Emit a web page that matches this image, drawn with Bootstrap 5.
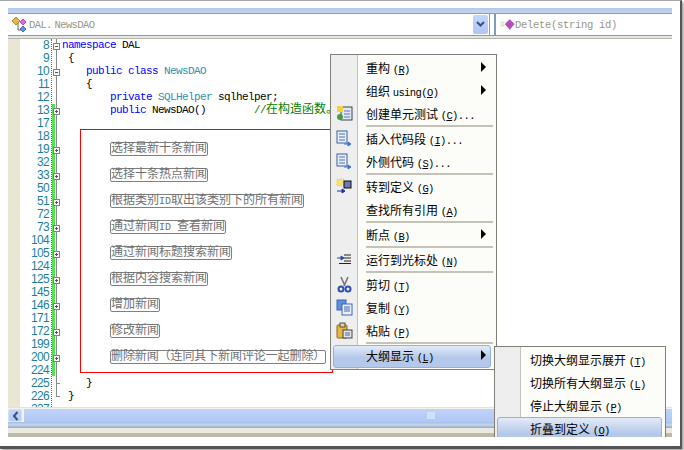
<!DOCTYPE html>
<html lang="zh"><head><meta charset="utf-8"><title>NewsDAO</title>
<link href="https://cdn.jsdelivr.net/npm/bootstrap@5.3.0/dist/css/bootstrap.min.css" rel="stylesheet">
<style>
html,body{margin:0;width:684px;height:450px;overflow:hidden;background:#fff}
.shot{width:684px;height:450px;position:relative;overflow:hidden;font-family:"Liberation Mono","Noto Sans CJK SC",monospace;font-size:11px;color:#000}
.frame{width:682px;height:449px;background:#fff;border-top:1px solid #a8a8a8;border-right:2px solid #555;border-bottom:3px solid #555;box-shadow:2px 2px 2px #aaa;padding:7px 0 8px 8px}
.ide{width:664px;height:429px}
.stripe{height:6px;background:linear-gradient(#b2c8ec,#c5d5ef);border-bottom:1px solid #7fa0c0}
.navrow{height:21px;background:#fff;gap:4px}
.navbox{height:21px;color:#a09d8f}
.navleft{width:482px;border-right:1px solid #7f9db9}
.navright{flex:1;border-left:2px solid #7f9db9}
.navtxt{font-size:10.5px;letter-spacing:-.3px;line-height:20px;color:#989585}
.navdal{word-spacing:-3px;letter-spacing:-.6px}
.ddbtn{width:15px;height:19px;margin:0 1px 0 auto;background:linear-gradient(#c4d6fb,#aec7f8);border-radius:2px}
.tan{height:4px;background:#dfe6ee;border-top:1px solid #7f9db9;border-bottom:1px solid #b9b5a4}
.edit{height:368px;overflow:hidden;background:#fff}
.margin-strip{width:12px;background:#e9e6d3}
.nums{width:29px;text-align:right;color:#1c7f9f;font-size:12px;letter-spacing:-.7px;line-height:13px;font-family:"Liberation Sans",sans-serif}
.dotline{width:3px;border-right:1px dotted #1c7f9f}
.foldcol{width:10px;position:relative}
.foldline{position:absolute;left:4px;top:0;width:1px;height:358px;background:#8a8a8a}
.foldgreen{position:absolute;left:0;top:65px;width:3px;height:272px;background:#54e254}
.tick{position:absolute;left:4px;width:4px;height:1px;background:#8a8a8a}
.code{flex:1;font-size:11px;line-height:13px;letter-spacing:-.6px}
.crow{height:13px;position:relative;white-space:pre}
.kw{color:#0000ff}.tp{color:#2b91af}.cm{color:#008000}
.cjk{font-size:12px;letter-spacing:0}
.fold{position:absolute;left:45px;width:7px;height:7px;background:#fff;border:1px solid #808080;z-index:2}
.fold::before{content:"";position:absolute;left:1px;right:1px;top:2px;height:1px;background:#555}
.fold.plus::after{content:"";position:absolute;top:1px;bottom:1px;left:2px;width:1px;background:#555}
.coll{display:inline-block;position:relative;top:-1px;height:14px;line-height:12px;border:1px solid #808080;border-radius:2px;color:#707070;font-size:12px;letter-spacing:0;margin-left:48px;padding:0;vertical-align:top}
.latin{font-size:10px}
.tight{letter-spacing:-.1px}
.redbox{position:absolute;left:80px;top:129px;width:253px;height:244px;border:1px solid #f00;z-index:3}
.hscroll{height:15px;background:#f4f3e9;border-top:1px solid #e6e3cf;padding:1px 0 0}
.arrowbtn{width:14px;height:13px;background:linear-gradient(#c0d3f9,#b4cbf6);border:1px solid #d5e0f5;border-radius:2px}
.track{flex:1;height:13px;margin-left:2px;background:linear-gradient(#bfd2fa,#b0c8f6)}
.grip{margin-left:166px}
.lower{height:6px;background:linear-gradient(#a9bfdc 0,#c6d6ee 50%,#8fa8c8 100%)}
.lightb{height:5px;background:#eceae0}
.tanb{height:4px;background:#bdb9a7}
.cmenu{position:absolute;background:#fcfcf9;border:1px solid #7f7f78;z-index:5;font-family:"Noto Sans CJK SC",sans-serif;font-size:12px;line-height:23px;color:#000}
.menu1{left:330px;top:54px;width:167px;height:316px;padding-top:1px}
.menu2{left:494px;top:346px;width:172px;height:91px;padding-top:1px;z-index:6;border-bottom:0;overflow:hidden}
.strip{position:absolute;left:0;top:0;bottom:0;background:#eee;border-right:1px solid #c5c2b8}
.menu1 .strip{width:27px}.menu2 .strip{width:26px}
.mi{height:23px;position:relative;padding-left:35px;white-space:nowrap}
.mi span.u{font-family:"Liberation Mono",monospace;font-size:10.5px;letter-spacing:-.6px}
.sep{height:2px;margin:0 3px 0 35px;background:#c5c2b8;position:relative}
.hi{position:absolute;background:linear-gradient(#e3ebf8,#b4c9e9 55%,#b4c9e9);border:1px solid #8fb2e2;border-radius:3px;z-index:0}
.hi1{left:2px;right:5px;top:290px;height:23px}
.hi2{left:2px;right:3px;top:70px;height:30px}
.caret{position:absolute;right:10px;top:6px;width:0;height:0;border-left:5px solid #000;border-top:5px solid transparent;border-bottom:5px solid transparent}
.ic{position:absolute;left:5px;top:3px}
</style></head><body>
<div class="shot"><div class="frame"><div class="ide d-flex flex-column">
<div class="stripe"></div>
<div class="navrow d-flex">
 <div class="navbox navleft d-flex align-items-center ps-1">
  <svg width="17" height="17" viewBox="0 0 17 17"><path d="M6 10v4h3M6 10V7" stroke="#666" fill="none"/><path d="M0 5l4-4 4 4-4 4z" fill="#e8b93c" stroke="#8a6a10" stroke-width=".7"/><path d="M8 6l3-3 3 3-3 3z" fill="#e860e8" stroke="#903090" stroke-width=".7"/><path d="M8 13l3-3 3 3-3 3z" fill="#5c90e0" stroke="#305090" stroke-width=".7"/></svg>
  <span class="navtxt navdal">DAL. NewsDAO</span>
  <div class="ddbtn d-flex align-items-center justify-content-center"><svg width="9" height="7" viewBox="0 0 9 7"><path d="M1 1l3.500 3.500L8 1" stroke="#39507a" stroke-width="2" fill="none"/></svg></div>
 </div>
 <div class="navbox navright d-flex align-items-center ps-1">
  <svg width="15" height="15" viewBox="0 0 17 15"><path d="M0 5h5M1 7h4M0 9h5" stroke="#d8d39a"/><path d="M6 7l5-5 5 5-5 6z" fill="#b84cc4" stroke="#7c3a8c" stroke-width=".7"/></svg>
  <span class="navtxt">Delete(string id)</span>
 </div>
</div>
<div class="tan"></div>
<div class="edit d-flex position-relative">
 <div class="margin-strip"></div>
 <div class="nums">8<br>9<br>10<br>11<br>12<br>13<br>17<br>18<br>19<br>32<br>33<br>50<br>51<br>72<br>73<br>104<br>105<br>124<br>125<br>145<br>146<br>171<br>172<br>199<br>200<br>224<br>225<br>226<br>227</div>
 <div class="dotline"></div>
 <div class="foldcol"><div class="foldline"></div><div class="foldgreen"></div><div class="tick" style="top:344px"></div><div class="tick" style="top:357px"></div></div>
 <div class="code">
<div class="crow"><span class="kw">namespace</span> DAL</div>
<div class="crow"> {</div>
<div class="crow">    <span class="kw">public class</span> <span class="tp">NewsDAO</span></div>
<div class="crow">    {</div>
<div class="crow">        <span class="kw">private</span> <span class="tp">SQLHelper</span> sqlhelper;</div>
<div class="crow">        <span class="kw">public</span> NewsDAO()        <span class="cm">//<span class="cjk">在构造函数。</span></span></div>
<div class="crow"></div><div class="crow"></div>
<div class="crow"><span class="coll">选择最新十条新闻</span></div><div class="crow"></div>
<div class="crow"><span class="coll">选择十条热点新闻</span></div><div class="crow"></div>
<div class="crow"><span class="coll">根据类别<span class="latin">ID</span>取出该类别下的所有新闻</span></div><div class="crow"></div>
<div class="crow"><span class="coll">通过新闻<span class="latin">ID </span>查看新闻</span></div><div class="crow"></div>
<div class="crow"><span class="coll">通过新闻标题搜索新闻</span></div><div class="crow"></div>
<div class="crow"><span class="coll">根据内容搜索新闻</span></div><div class="crow"></div>
<div class="crow"><span class="coll">增加新闻</span></div><div class="crow"></div>
<div class="crow"><span class="coll">修改新闻</span></div><div class="crow"></div>
<div class="crow"><span class="coll tight">删除新闻（连同其下新闻评论一起删除）</span></div><div class="crow"></div>
<div class="crow">    }</div>
<div class="crow"> }</div>
 </div>
 <i class="fold" style="top:4px"></i><i class="fold" style="top:30px"></i>
 <i class="fold plus" style="top:69px"></i><i class="fold plus" style="top:108px"></i><i class="fold plus" style="top:134px"></i><i class="fold plus" style="top:160px"></i><i class="fold plus" style="top:186px"></i><i class="fold plus" style="top:212px"></i><i class="fold plus" style="top:238px"></i><i class="fold plus" style="top:264px"></i><i class="fold plus" style="top:290px"></i><i class="fold plus" style="top:316px"></i>
</div>
<div class="hscroll d-flex">
 <div class="arrowbtn d-flex align-items-center justify-content-center"><svg width="7" height="10" viewBox="0 0 7 10"><path d="M5.500 1L2 5l3.500 4" stroke="#39507a" stroke-width="2" fill="none"/></svg></div>
 <div class="track d-flex align-items-center justify-content-center"><svg class="grip" width="9" height="7" viewBox="0 0 9 7"><path d="M1 0v7M3 0v7M5 0v7M7 0v7" stroke="#eef3fd"/></svg></div>
</div>
<div class="lower"></div><div class="lightb"></div><div class="tanb"></div>
</div></div>

<div class="redbox"></div>

<div class="cmenu menu1"><div class="strip"></div><div class="hi hi1"></div>
 <div class="mi">重构 <span class="u">(<u>R</u>)</span><i class="caret"></i></div>
 <div class="mi">组织 <span class="u">using(<u>O</u>)</span><i class="caret"></i></div>
 <div class="mi"><svg class="ic" width="17" height="17" viewBox="0 0 17 17"><rect x="5" y="2" width="11" height="13" fill="#dfe7f3" stroke="#33475f"/><path d="M8 6h6M8 9h6M8 12h6" stroke="#5f7da3"/><rect x="1" y="1" width="6" height="6" fill="#f4cf45"/><circle cx="4" cy="12" r="3" fill="#4e9a3c"/></svg>创建单元测试 <span class="u">(<u>C</u>)...</span></div>
 <div class="sep"></div>
 <div class="mi"><svg class="ic" width="17" height="17" viewBox="0 0 17 17"><rect x="1" y="1" width="10" height="12" fill="#eaf0fa" stroke="#3a5f9e"/><path d="M3 4h6M3 7h6M3 10h6" stroke="#4a6fb0"/><path d="M8 14h6M12 12l3 2-3 2z" stroke="#3f74c8" fill="#3f74c8"/></svg>插入代码段 <span class="u">(<u>I</u>)...</span></div>
 <div class="mi"><svg class="ic" width="17" height="17" viewBox="0 0 17 17"><rect x="1" y="1" width="10" height="12" fill="#eaf0fa" stroke="#3a5f9e"/><path d="M3 4h6M3 7h6M3 10h6" stroke="#4a6fb0"/><path d="M8 14h6M12 12l3 2-3 2z" stroke="#3f74c8" fill="#3f74c8"/></svg>外侧代码 <span class="u">(<u>S</u>)...</span></div>
 <div class="sep"></div>
 <div class="mi"><svg class="ic" width="17" height="17" viewBox="0 0 17 17"><rect x="1" y="1" width="7" height="7" fill="#f6e27a" stroke="#eac84c" stroke-dasharray="1 1"/><rect x="8" y="3" width="7" height="7" fill="#6f78b8" stroke="#111"/><path d="M1 13h7M6 11l3 2-3 2z" stroke="#1b2fa8" fill="#1b2fa8"/></svg>转到定义 <span class="u">(<u>G</u>)</span></div>
 <div class="mi">查找所有引用 <span class="u">(<u>A</u>)</span></div>
 <div class="sep"></div>
 <div class="mi">断点 <span class="u">(<u>B</u>)</span><i class="caret"></i></div>
 <div class="sep"></div>
 <div class="mi"><svg class="ic" width="17" height="17" viewBox="0 0 17 17"><path d="M8 4h7M8 7h7M8 10h7M3 12.500h12" stroke="#222"/><path d="M1 7h5M5 5l3 2-3 2z" stroke="#2748b8" fill="#2748b8"/></svg>运行到光标处 <span class="u">(<u>N</u>)</span></div>
 <div class="sep"></div>
 <div class="mi"><svg class="ic" width="17" height="17" viewBox="0 0 17 17"><path d="M5 1l4 9M12 1L8 10" stroke="#6f6f78" stroke-width="1.500"/><circle cx="5" cy="13" r="2.500" fill="none" stroke="#2c4fb0" stroke-width="2"/><circle cx="12" cy="13" r="2.500" fill="none" stroke="#2c4fb0" stroke-width="2"/></svg>剪切 <span class="u">(<u>T</u>)</span></div>
 <div class="mi"><svg class="ic" width="17" height="17" viewBox="0 0 17 17"><rect x="1" y="1" width="9" height="10" fill="#5d8ee0" stroke="#3a66b8"/><rect x="6" y="5" width="10" height="11" fill="#eaf0fa" stroke="#3a66b8"/><path d="M8 8h6M8 10h6M8 12h6" stroke="#3a66b8"/></svg>复制 <span class="u">(<u>Y</u>)</span></div>
 <div class="mi"><svg class="ic" width="17" height="17" viewBox="0 0 17 17"><rect x="1" y="3" width="10" height="13" rx="1" fill="#e9b83e" stroke="#8a6520"/><rect x="4" y="1" width="5" height="4" fill="#d8d2b8" stroke="#5a5030"/><rect x="7" y="8" width="9" height="8" fill="#dce4ef" stroke="#444"/><path d="M9 11h5M9 13h5" stroke="#667"/></svg>粘贴 <span class="u">(<u>P</u>)</span></div>
 <div class="sep"></div>
 <div class="mi">大纲显示 <span class="u">(<u>L</u>)</span><i class="caret"></i></div>
</div>

<div class="cmenu menu2"><div class="strip"></div><div class="hi hi2"></div>
 <div class="mi">切换大纲显示展开 <span class="u">(<u>T</u>)</span></div>
 <div class="mi">切换所有大纲显示 <span class="u">(<u>L</u>)</span></div>
 <div class="mi">停止大纲显示 <span class="u">(<u>P</u>)</span></div>
 <div class="mi">折叠到定义 <span class="u">(<u>O</u>)</span></div>
</div>
</div>
</body></html>
